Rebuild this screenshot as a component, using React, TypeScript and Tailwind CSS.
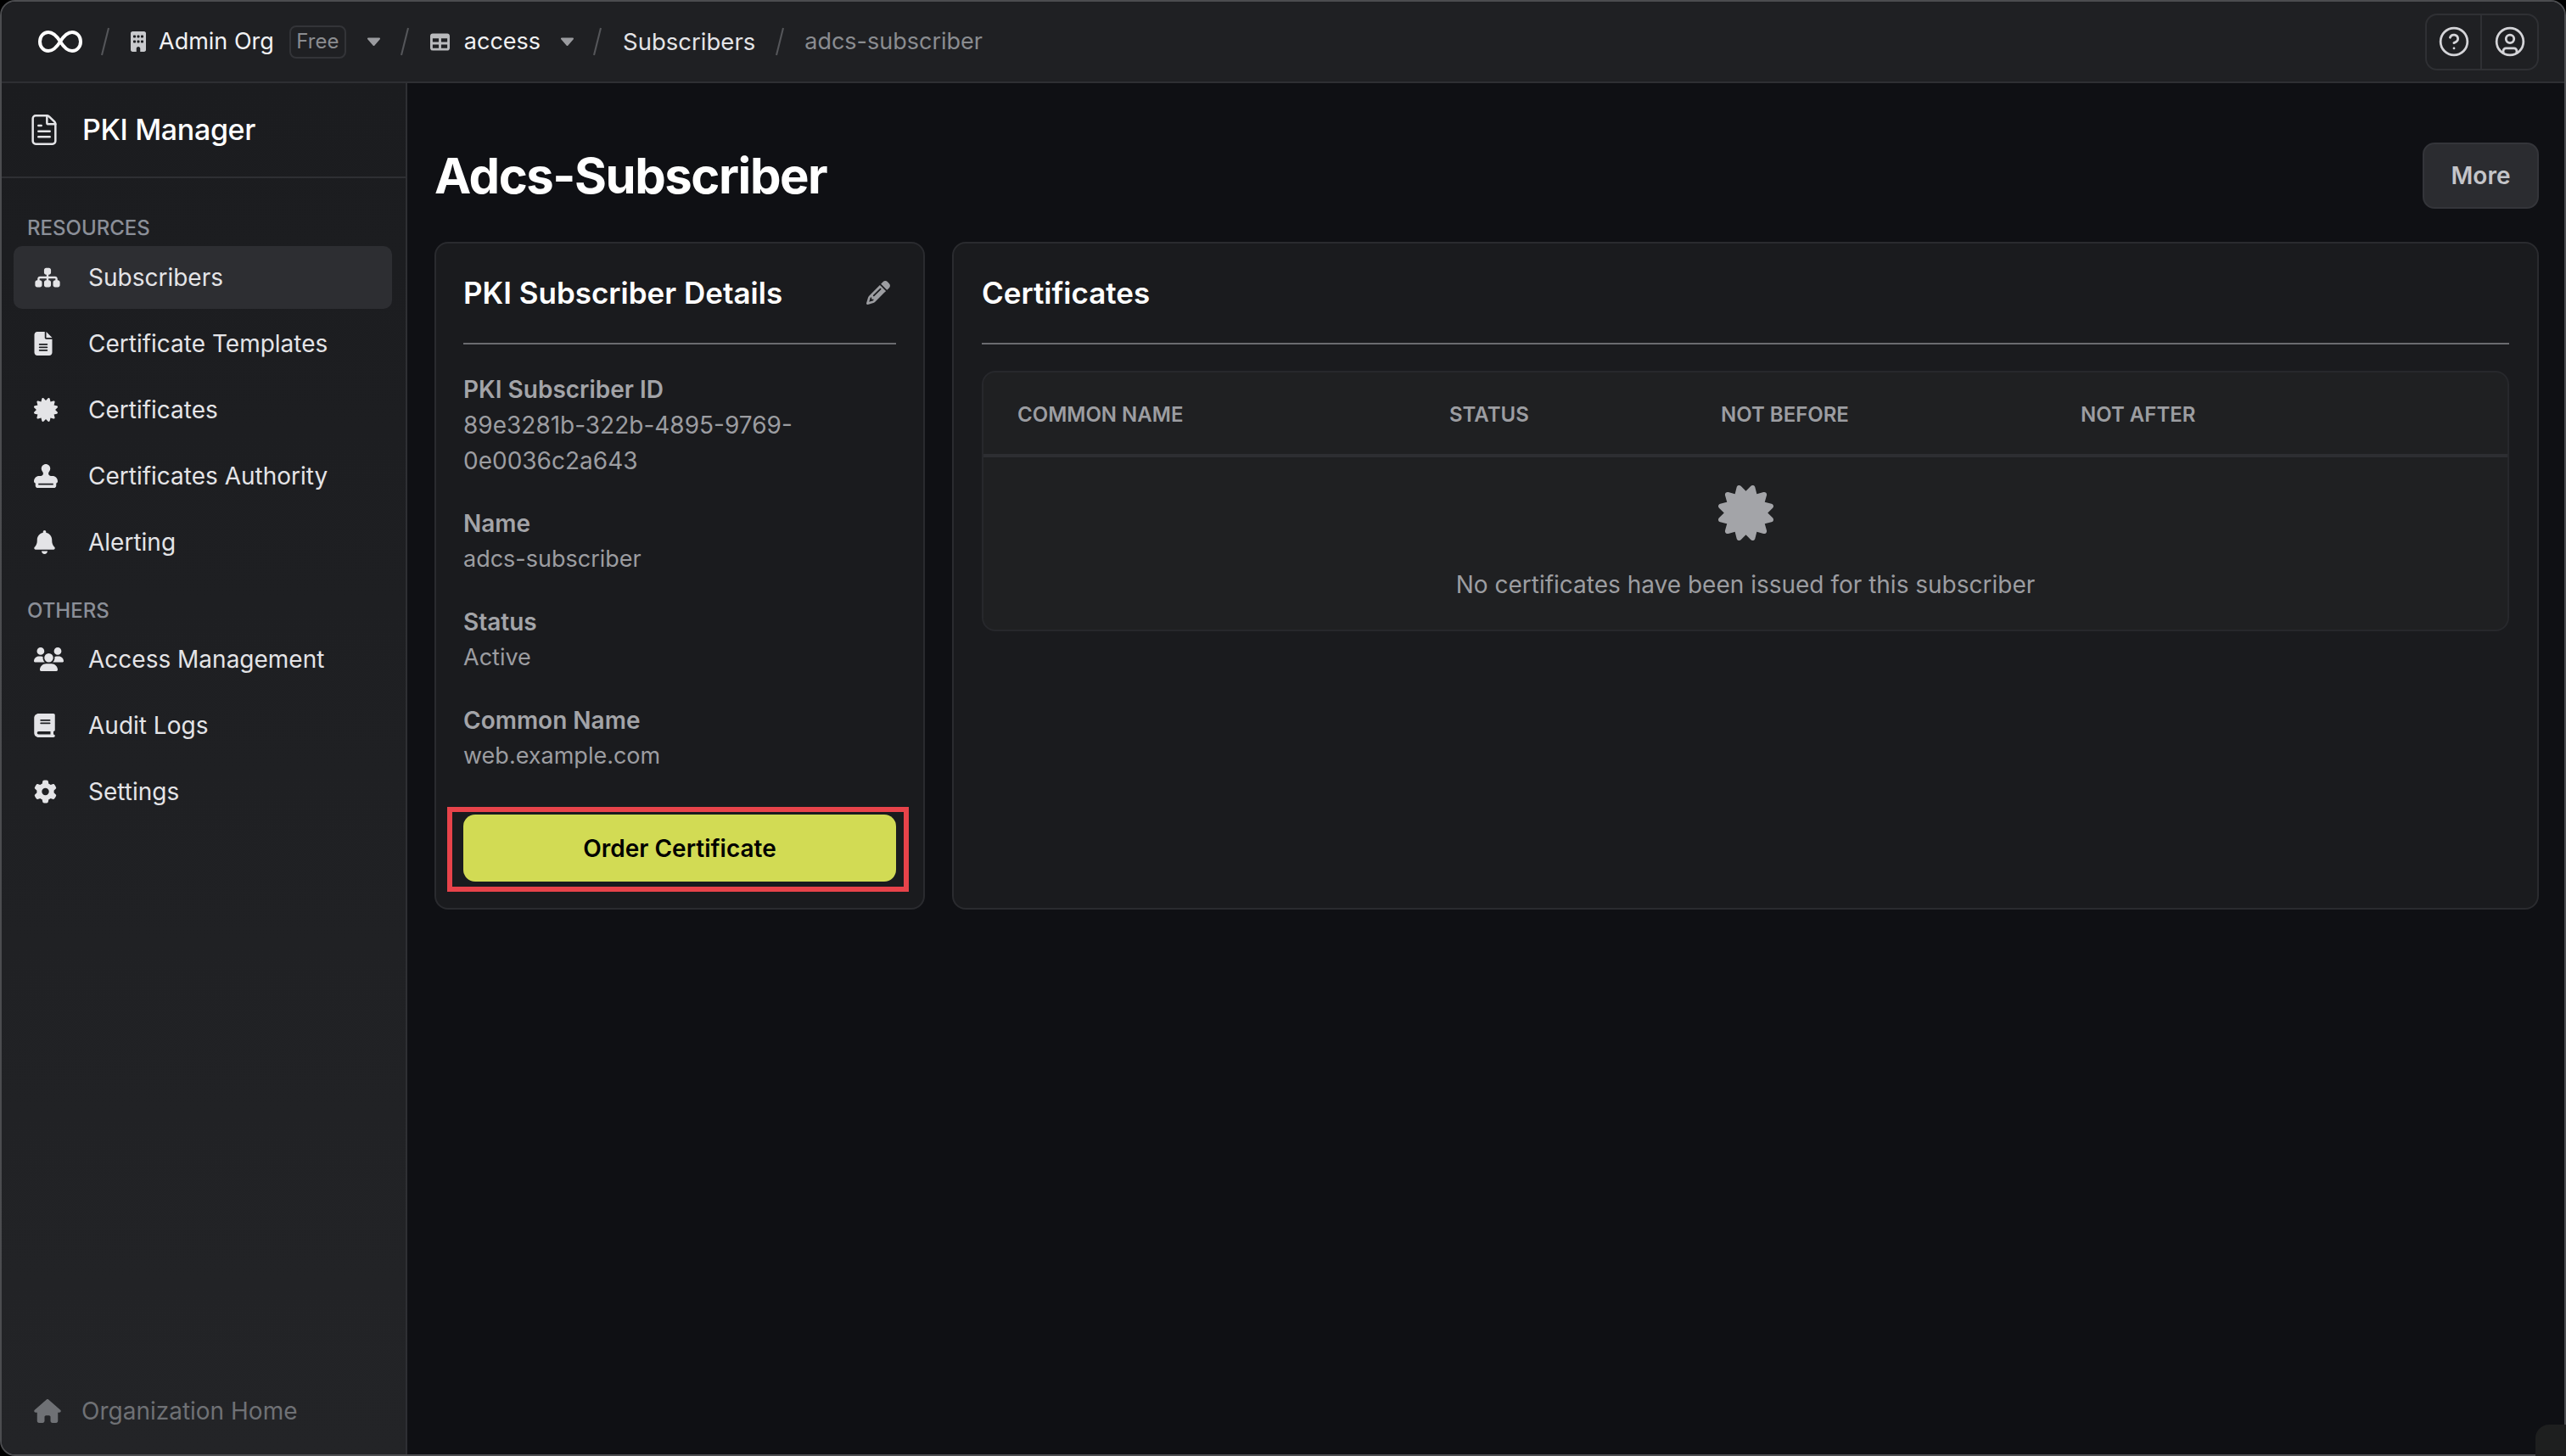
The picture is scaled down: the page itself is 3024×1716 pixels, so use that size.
import { CircleHelp, CircleUser, FileText } from 'lucide-react';
import { FaBell, FaBook, FaBuilding, FaCertificate, FaFileLines, FaGear, FaHouse, FaPencil, FaSitemap, FaStamp, FaTable, FaUsers } from 'react-icons/fa6';

const resources = [
  { label: 'Subscribers', icon: <FaSitemap className="w-[32px] h-[26px]" />, active: true },
  { label: 'Certificate Templates', icon: <FaFileLines className="w-[22px] h-[28px]" /> },
  { label: 'Certificates', icon: <FaCertificate className="w-[28px] h-[28px]" /> },
  { label: 'Certificates Authority', icon: <FaStamp className="w-[28px] h-[28px]" /> },
  { label: 'Alerting', icon: <FaBell className="w-[25px] h-[28px]" /> },
];

const others = [
  { label: 'Access Management', icon: <FaUsers className="w-[35px] h-[28px]" /> },
  { label: 'Audit Logs', icon: <FaBook className="w-[25px] h-[28px]" /> },
  { label: 'Settings', icon: <FaGear className="w-[27px] h-[28px]" /> },
];

const details = [
  { label: 'PKI Subscriber ID', value: '89e3281b-322b-4895-9769-0e0036c2a643', size: 'text-[28px]' },
  { label: 'Name', value: 'adcs-subscriber', size: 'text-[27px]' },
  { label: 'Status', value: 'Active', size: 'text-[27px]' },
  { label: 'Common Name', value: 'web.example.com', size: 'text-[27px]' },
];

function Slash({ className }: { className: string }) {
  return (
    <svg viewBox="0 0 10 34" className={`w-[10px] h-[34px] shrink-0 ${className}`}>
      <line x1="9" y1="1" x2="1" y2="33" stroke="#55565a" strokeWidth="2" />
    </svg>
  );
}

function Caret({ className }: { className: string }) {
  return (
    <svg viewBox="0 0 17 10" className={`w-[17px] h-[10px] shrink-0 ${className}`}>
      <path d="M2 1.5h13L8.500 9z" fill="#9a9b9f" stroke="#9a9b9f" strokeWidth="2" strokeLinejoin="round" />
    </svg>
  );
}

function NavItem({ label, icon, active }: { label: string; icon: React.ReactNode; active?: boolean }) {
  return (
    <div className={`flex items-center h-[74px] pl-[24px] rounded-[10px] text-[28px] text-[#e4e4e7] ${active ? 'bg-[#2d2e32]' : ''}`}>
      <span className="w-[64px] shrink-0 flex items-center">{icon}</span>
      {label}
    </div>
  );
}

export default function App() {
  return (
    <div className="relative w-[3024px] h-[1716px] bg-black overflow-hidden font-[Inter,sans-serif]">
      <div className="flex flex-col h-full border-2 border-[#4b4c4f] rounded-[18px] overflow-hidden bg-[#0f1014]">
        {/* Top bar */}
        <div className="flex items-center h-[96px] shrink-0 pl-[43px] pr-[30px] bg-[#1f2023] border-b-2 border-[#2e2f33] text-[27px] leading-[40px]">
          <svg viewBox="0 0 52 26" fill="none" stroke="white" strokeWidth="4" className="w-[52px] h-[26px] shrink-0">
            <path d="M26 13C21 5 17 2 12 2 6 2 2 7 2 13s4 11 10 11c5 0 9-3 14-11s9-11 14-11c6 0 10 5 10 11s-4 11-10 11c-5 0-9-3-14-11z" />
          </svg>
          <Slash className="ml-[22px]" />
          <FaBuilding className="ml-[25px] w-[18px] h-[24px] text-[#c9cacd] shrink-0" />
          <span className="ml-[15px] text-[#f1f1f3]">Admin Org</span>
          <span className="ml-[18px] h-[39px] w-[67px] flex items-center justify-center border-2 border-[#333438] rounded-[8px] text-[24px] text-[#8a8c90]">Free</span>
          <Caret className="ml-[24px]" />
          <Slash className="ml-[23px]" />
          <FaTable className="ml-[24px] w-[25px] h-[23px] text-[#b9babd] shrink-0" />
          <span className="ml-[16px] text-[#f1f1f3]">access</span>
          <Caret className="ml-[23px]" />
          <Slash className="ml-[22px]" />
          <span className="ml-[25px] text-[27.500px] text-[#e4e4e7]">Subscribers</span>
          <Slash className="ml-[24px]" />
          <span className="ml-[24px] text-[#8a8c90]">adcs-subscriber</span>
          <div className="ml-auto flex h-[67px] border-2 border-[#2f3034] rounded-[14px] text-[#d4d4d8]">
            <div className="w-[65px] flex items-center justify-center border-r-2 border-[#2f3034]">
              <CircleHelp className="w-[38px] h-[38px]" strokeWidth={1.75} />
            </div>
            <div className="w-[65px] flex items-center justify-center">
              <CircleUser className="w-[38px] h-[38px]" strokeWidth={1.75} />
            </div>
          </div>
        </div>

        <div className="flex flex-1 min-h-0">
          {/* Sidebar */}
          <div className="flex flex-col w-[478px] shrink-0 border-r-2 border-[#2e2f33] bg-gradient-to-b from-[#1b1c1f] to-[#232427]">
            <div className="flex items-center h-[112px] pl-[30px] border-b-2 border-[#2e2f33]">
              <FileText className="w-[40px] h-[40px] text-[#e4e4e7]" strokeWidth={1.5} />
              <span className="ml-[25px] text-[34px] leading-[48px] font-medium tracking-[-0.01em] text-white">PKI Manager</span>
            </div>
            <div className="pl-[14px] pr-[16px] pt-[41px]">
              <div className="h-[36px] mb-[3px] pl-[16px] text-[24px] leading-[36px] font-medium text-[#8b8f98] uppercase">Resources</div>
              <div className="flex flex-col gap-[4px]">
                {resources.map(item => (
                  <NavItem key={item.label} {...item} />
                ))}
              </div>
              <div className="h-[36px] mt-[26px] mb-[2px] pl-[16px] text-[24px] leading-[36px] font-medium text-[#8b8f98] uppercase">Others</div>
              <div className="flex flex-col gap-[4px]">
                {others.map(item => (
                  <NavItem key={item.label} {...item} />
                ))}
              </div>
            </div>
            <div className="mt-auto mb-[21px] h-[60px] pl-[38px] flex items-center text-[28px] text-[#6f7175]">
              <FaHouse className="w-[32px] h-[28px] shrink-0" />
              <span className="ml-[24px]">Organization Home</span>
            </div>
          </div>

          {/* Main */}
          <div className="flex-1 min-w-0 pl-[32px] pr-[30px] pt-[70px]">
            <div className="flex items-center justify-between h-[78px] mb-[39px]">
              <h1 className="text-[58px] leading-[72px] font-bold tracking-[-0.025em] text-white">Adcs-Subscriber</h1>
              <button className="w-[137px] h-[78px] bg-[#2b2c30] border-2 border-[#34353a] rounded-[14px] text-[28px] font-semibold text-[#c4c5c9]">More</button>
            </div>

            <div className="flex gap-[32px] h-[787px]">
              <div className="flex flex-col w-[578px] shrink-0 px-[32px] bg-[#1a1b1e] border-2 border-[#2a2b2f] rounded-[16px]">
                <div className="flex items-center justify-between pt-[32px] pb-[33px] border-b-2 border-[#6b6c70]">
                  <h2 className="text-[35px] leading-[52px] font-semibold text-white">PKI Subscriber Details</h2>
                  <FaPencil className="w-[28px] h-[28px] mr-[7px] text-[#9c9da1]" />
                </div>
                <div className="flex flex-col gap-[32px] pt-[32px] text-[28px] leading-[42px]">
                  {details.map(d => (
                    <div key={d.label}>
                      <div className="font-semibold text-[#a3a4a8]">{d.label}</div>
                      <div className={`${d.size} text-[#9c9da1]`}>{d.value}</div>
                    </div>
                  ))}
                </div>
                <div className="relative mt-auto mb-[31px]">
                  <button className="w-full h-[79px] bg-[#d2db54] rounded-[14px] text-[28px] font-semibold text-black">Order Certificate</button>
                  <div className="absolute -left-[19px] -right-[15px] -top-[9px] -bottom-[12px] border-[6px] border-[#e8434a]" />
                </div>
              </div>

              <div className="flex-1 min-w-0 px-[33px] bg-[#1a1b1e] border-2 border-[#2a2b2f] rounded-[16px]">
                <div className="flex items-center pt-[32px] pb-[33px] border-b-2 border-[#6b6c70]">
                  <h2 className="text-[35px] leading-[52px] font-semibold text-white">Certificates</h2>
                </div>
                <div className="mt-[31px] bg-[#1f2022] border-2 border-[#27282c] rounded-[16px]">
                  <div className="grid grid-cols-[509px_320px_424px_1fr] items-center h-[100px] pt-[4px] pl-[40px] border-b-4 border-[#2d2e32] text-[24px] font-semibold uppercase text-[#9c9da1]">
                    <div>Common Name</div>
                    <div>Status</div>
                    <div>Not Before</div>
                    <div>Not After</div>
                  </div>
                  <div className="flex flex-col items-center pt-[33px] pb-[33px]">
                    <FaCertificate className="w-[65px] h-[65px] text-[#a3a4a8]" />
                    <p className="mt-[32px] text-[28px] leading-[40px] text-[#9c9da1]">No certificates have been issued for this subscriber</p>
                  </div>
                </div>
              </div>
            </div>
          </div>
        </div>
      </div>
      <div className="absolute right-0 bottom-0 w-[36px] h-[37px] bg-[#1e1f1f] rounded-tl-[16px]" />
    </div>
  );
}
